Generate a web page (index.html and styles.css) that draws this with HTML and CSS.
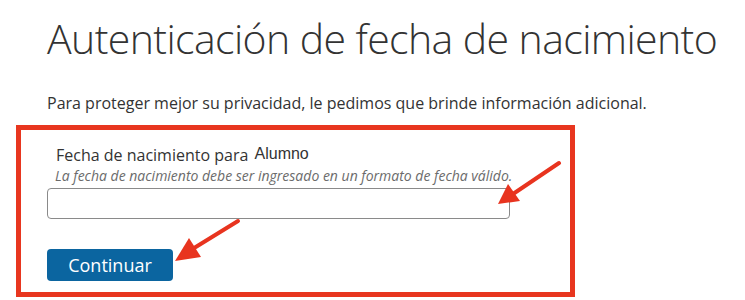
FILE: index.html
```html
<!DOCTYPE html>
<html lang="es">
<head>
    <meta charset="UTF-8">
    <meta name="viewport" content="width=device-width, initial-scale=1.0">
    <title>Autenticación de fecha de nacimiento</title>
    <link rel="stylesheet" href="styles.css">
</head>
<body>
    <div class="page">
        <h1 class="title">Autenticación de fecha de nacimiento</h1>
        <p class="intro">Para proteger mejor su privacidad, le pedimos que brinde información adicional.</p>

        <div class="highlight">
            <div class="field">
                <label class="field-label" for="dob">Fecha de nacimiento para <span class="who">Alumno</span></label>
                <div class="field-help">La fecha de nacimiento debe ser ingresado en un formato de fecha válido.</div>
                <input class="field-input" id="dob" type="text">
            </div>
            <button class="button" type="button">Continuar</button>
        </div>
    </div>

    <!-- flechas rojas de anotación -->
    <svg class="arrows" width="745" height="300" viewBox="0 0 745 300">
        <line x1="559" y1="163" x2="510" y2="196" stroke="#e8341f" stroke-width="4" stroke-linecap="round"/>
        <polygon points="498,204 508,184 520,201" fill="#e8341f"/>
        <line x1="238" y1="221" x2="186" y2="253" stroke="#e8341f" stroke-width="4" stroke-linecap="round"/>
        <polygon points="175,261 189,238 201,257" fill="#e8341f"/>
    </svg>
</body>
</html>
```

FILE: styles.css
```css
html, body {
    margin: 0;
    padding: 0;
    background: #fff;
}

body {
    position: relative;
    width: 745px;
    height: 300px;
    overflow: hidden;
    font-family: 'Open Sans', 'Noto Sans', sans-serif;
    color: #333;
}

.page {
    padding-left: 16px;
}

.title {
    margin: 10px 0 0 31px;
    font-size: 41px;
    font-weight: 300;
    letter-spacing: -0.6px;
    line-height: 57px;
    white-space: nowrap;
    color: #333;
}

.intro {
    margin: 25px 0 0 31px;
    font-size: 16px;
    line-height: 22px;
    white-space: nowrap;
    color: #333;
}

.highlight {
    margin-top: 11px;
    width: 523px;
    height: 162px;
    border: 5px solid #e8361f;
    padding: 0 0 0 26px;
}

.field {
    padding-top: 13px;
}

.field-label {
    display: block;
    padding-left: 9px;
    font-size: 16px;
    line-height: 22px;
    color: #333;
}

.who {
    margin-left: 2px;
    font-family: 'Liberation Sans', Arial, sans-serif;
    font-size: 16px;
    vertical-align: 2px;
}

.field-help {
    padding-left: 8px;
    font-size: 14px;
    font-style: italic;
    line-height: 19px;
    white-space: nowrap;
    color: #6b6b6b;
}

.field-input {
    display: block;
    box-sizing: border-box;
    width: 463px;
    height: 31px;
    margin-top: 3px;
    border: 1px solid #8a8a8a;
    border-radius: 4px;
    background: #fff;
}

.button {
    margin-top: 30px;
    width: 126px;
    height: 32px;
    border: none;
    border-radius: 4px;
    background-color: #0b65a0;
    color: #fff;
    font-family: 'Open Sans', 'Noto Sans', sans-serif;
    font-size: 18px;
    cursor: pointer;
}

.arrows {
    position: absolute;
    left: 0;
    top: 0;
    pointer-events: none;
}
```
